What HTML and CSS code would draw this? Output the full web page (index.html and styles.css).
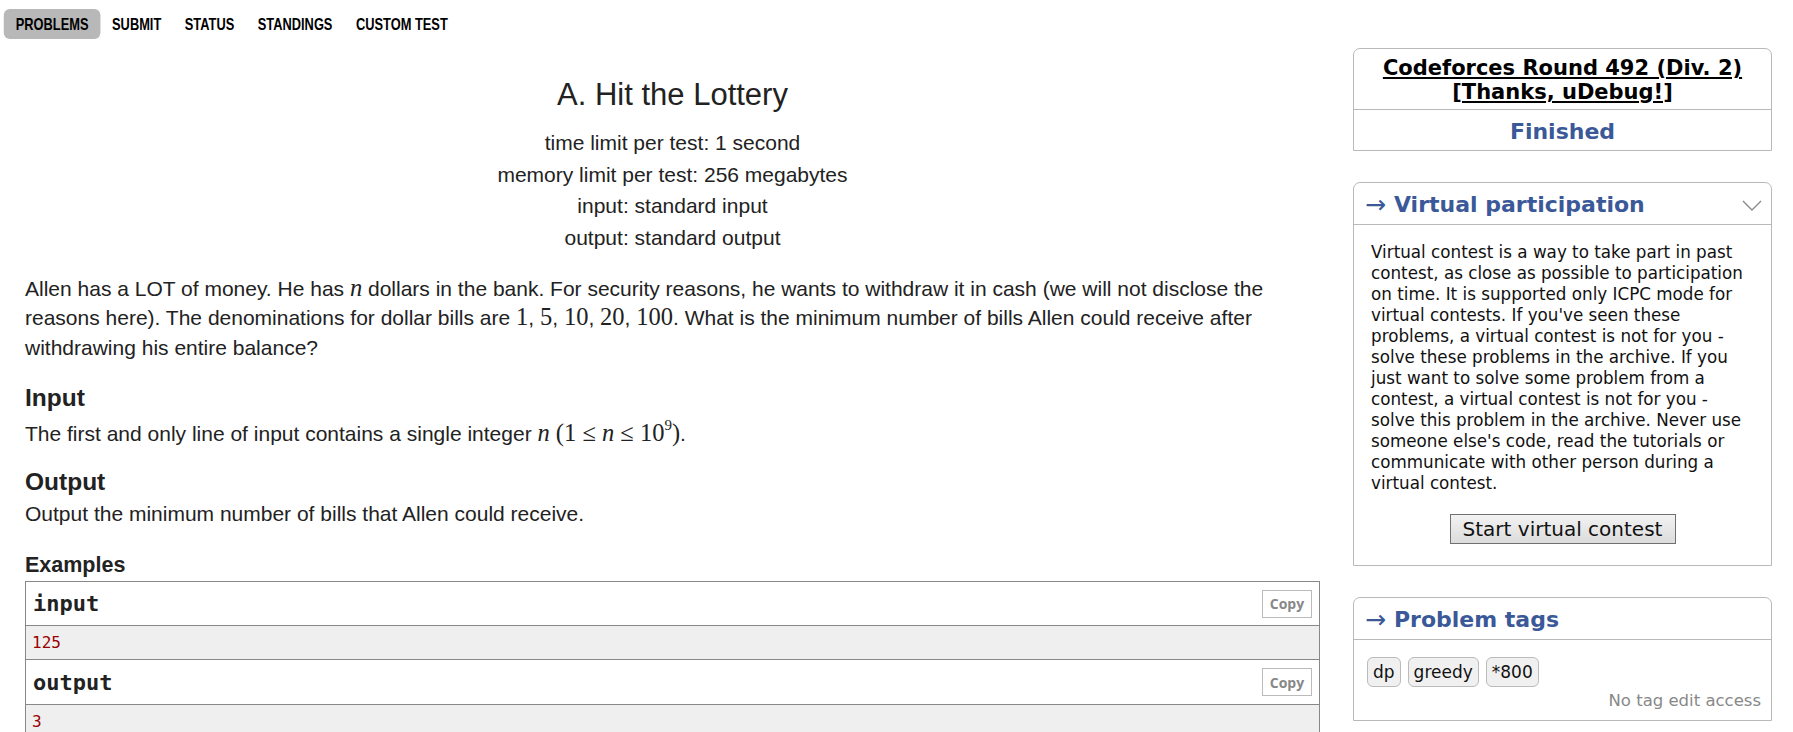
FILE: index.html
```html
<!DOCTYPE html>
<html lang="en">
<head>
<meta charset="utf-8">
<title>A. Hit the Lottery</title>
<link rel="stylesheet" href="styles.css">
</head>
<body>
<nav class="menu">
  <a class="menu-item active" href="#">PROBLEMS</a>
  <a class="menu-item" href="#">SUBMIT</a>
  <a class="menu-item" href="#">STATUS</a>
  <a class="menu-item" href="#">STANDINGS</a>
  <a class="menu-item" href="#">CUSTOM TEST</a>
</nav>
<div class="page">
  <main class="problem">
    <div class="header">
      <h1 class="title">A. Hit the Lottery</h1>
      <div class="limits">
        <div>time limit per test: 1 second</div>
        <div>memory limit per test: 256 megabytes</div>
        <div>input: standard input</div>
        <div>output: standard output</div>
      </div>
    </div>
    <p class="legend">Allen has a LOT of money. He has <span class="math"><i>n</i></span> dollars in the bank. For security reasons, he wants to withdraw it in cash (we will not disclose the reasons here). The denominations for dollar bills are <span class="math">1</span>, <span class="math">5</span>, <span class="math">10</span>, <span class="math">20</span>, <span class="math">100</span>. What is the minimum number of bills Allen could receive after withdrawing his entire balance?</p>

    <h2 class="section-title">Input</h2>
    <p class="section-text">The first and only line of input contains a single integer <span class="math"><i>n</i> (1 ≤ <i>n</i> ≤ 10<sup>9</sup>)</span>.</p>

    <h2 class="section-title out">Output</h2>
    <p class="section-text out-text">Output the minimum number of bills that Allen could receive.</p>

    <h3 class="examples-title">Examples</h3>
    <div class="sample">
      <div class="sample-head"><span>input</span><button class="copy">Copy</button></div>
      <pre class="sample-data">125</pre>
      <div class="sample-head"><span>output</span><button class="copy">Copy</button></div>
      <pre class="sample-data">3</pre>
    </div>
  </main>

  <aside class="sidebar">
    <section class="box">
      <div class="contest-name"><a href="#">Codeforces Round 492 (Div. 2) [Thanks, uDebug!]</a></div>
      <div class="contest-phase">Finished</div>
    </section>

    <section class="box">
      <div class="box-head">
        <span class="arrow">→</span><span class="box-title">Virtual participation</span>
        <svg class="chevron" width="20" height="11" viewBox="0 0 20 11"><polyline points="1,1 10,10 19,1" fill="none" stroke="#8a8a8a" stroke-width="1.4"/></svg>
      </div>
      <div class="box-body">
        <p class="vp-text">Virtual contest is a way to take part in past contest, as close as possible to participation on time. It is supported only ICPC mode for virtual contests. If you've seen these problems, a virtual contest is not for you - solve these problems in the archive. If you just want to solve some problem from a contest, a virtual contest is not for you - solve this problem in the archive. Never use someone else's code, read the tutorials or communicate with other person during a virtual contest.</p>
        <div class="vp-action"><button class="vp-button">Start virtual contest</button></div>
      </div>
    </section>

    <section class="box">
      <div class="box-head">
        <span class="arrow">→</span><span class="box-title">Problem tags</span>
      </div>
      <div class="tags-body">
        <div class="tags">
          <span class="tag">dp</span>
          <span class="tag">greedy</span>
          <span class="tag">*800</span>
        </div>
        <div class="tag-note">No tag edit access</div>
      </div>
    </section>
  </aside>
</div>
</body>
</html>
```

FILE: styles.css
```css
html, body {
  margin: 0;
  padding: 0;
  background: #fff;
}

body {
  font-family: "Liberation Sans", Arial, sans-serif;
  color: #222;
}

/* ---------- top menu (narrow face emulated by horizontal scale) ---------- */
.menu {
  display: flex;
  padding: 9px 0 9px 5.3px;
  height: 30px;
  transform: scaleX(0.755);
  transform-origin: left top;
}

.menu-item {
  display: block;
  height: 30px;
  line-height: 31px;
  padding: 0 15.6px;
  border-radius: 8px / 6px;
  font-family: "Liberation Sans", Arial, sans-serif;
  font-weight: bold;
  font-size: 17px;
  color: #000;
  text-decoration: none;
  white-space: nowrap;
}

.menu-item.active {
  background: #b8b8b8;
}

/* ---------- page ---------- */
.page {
  display: flex;
  align-items: flex-start;
  gap: 33px;
  padding: 0 21px 0 25px;
}

.problem {
  flex: 1;
  min-width: 0;
}

.sidebar {
  width: 419px;
  flex: none;
  display: flex;
  flex-direction: column;
  gap: 31px;
}

/* ---------- problem header ---------- */
.header {
  text-align: center;
  padding-top: 27px;
}

.title {
  margin: 0;
  font-weight: normal;
  font-size: 31px;
  line-height: 40px;
  color: #222;
}

.limits {
  margin-top: 12px;
  font-size: 21px;
  line-height: 31.5px;
}

/* ---------- statement ---------- */
.legend,
.section-text {
  margin: 0;
  font-size: 21px;
  line-height: 29.4px;
}

.legend {
  margin-top: 21px;
}

.math {
  font-family: "Liberation Serif", "Times New Roman", serif;
  font-size: 24.5px;
  line-height: 0;
}

.math i {
  font-style: italic;
}

.math sup {
  font-size: 15px;
  line-height: 0;
  vertical-align: 11px;
}

.section-title {
  margin: 21px 0 0;
  font-size: 24.5px;
  line-height: 30px;
  font-weight: bold;
}

.section-title.out {
  margin-top: 18px;
}

.section-text {
  margin-top: 6px;
}

.section-text.out-text {
  margin-top: 2px;
}

.examples-title {
  margin: 24px 0 0;
  font-size: 21.5px;
  line-height: 26px;
  font-weight: bold;
}

/* ---------- samples ---------- */
.sample {
  margin-top: 3px;
  border: 1px solid #888;
}

.sample-head {
  display: flex;
  align-items: center;
  justify-content: space-between;
  height: 43px;
  padding: 0 7px 0 7px;
  border-bottom: 1px solid #888;
  font-family: "DejaVu Sans Mono", "Liberation Mono", monospace;
  font-weight: bold;
  font-size: 22px;
  color: #222;
}

.sample-head + .sample-data + .sample-head {
  height: 44px;
}

.copy {
  height: 28px;
  width: 50px;
  padding: 0;
  border: 1px solid #bbb;
  background: #fff;
  font-family: "Open Sans", "Liberation Sans", sans-serif;
  font-weight: bold;
  font-size: 14px;
  color: #888;
}

.sample-data {
  margin: 0;
  height: 33px;
  line-height: 33px;
  padding: 0 6px;
  background: #efefef;
  border-bottom: 1px solid #888;
  font-family: "DejaVu Sans Mono", "Liberation Mono", monospace;
  font-size: 16px;
  color: #990000;
}

.sample-data:last-child {
  border-bottom: none;
}

/* ---------- sidebar boxes ---------- */
.box {
  border: 1px solid #b9b9b9;
  border-radius: 7px 7px 0 0;
  font-family: "DejaVu Sans", Verdana, sans-serif;
  color: #222;
}

.contest-name {
  text-align: center;
  padding: 7px 10px 5px;
  font-size: 21px;
  line-height: 24px;
  font-weight: bold;
  border-bottom: 1px solid #b9b9b9;
}

.contest-name a {
  color: #000;
  text-decoration: underline;
}

.contest-phase {
  text-align: center;
  height: 37px;
  padding-top: 3px;
  line-height: 38px;
  font-size: 22px;
  font-weight: bold;
  color: #3b5998;
}

.box-head {
  display: flex;
  align-items: center;
  height: 40px;
  padding: 1px 9px 0 11px;
  border-bottom: 1px solid #b9b9b9;
  color: #3b5998;
}

.arrow {
  font-size: 25px;
  font-weight: normal;
  margin-right: 8px;
  line-height: 1;
}

.box-title {
  font-size: 22px;
  font-weight: bold;
}

.chevron {
  margin-left: auto;
  margin-top: 3px;
}

.box-body {
  padding: 17px 17px 21px;
}

.vp-text {
  margin: 0;
  padding-right: 5px;
  font-size: 16.75px;
  line-height: 21px;
  color: #111;
}

.vp-action {
  display: flex;
  justify-content: center;
  margin-top: 20px;
}

.vp-button {
  height: 30px;
  width: 226px;
  padding: 0;
  border: 1px solid #707070;
  border-radius: 0;
  background: linear-gradient(#f2f2f2, #dcdcdc);
  font-family: "DejaVu Sans", Verdana, sans-serif;
  font-size: 20px;
  color: #111;
}

.tags-body {
  padding: 17px 10px 8px 13px;
}

.tags {
  display: flex;
  gap: 7px;
}

.tag {
  display: block;
  height: 28px;
  line-height: 28px;
  padding: 0 5px;
  border: 1px solid #bbb;
  border-radius: 6px;
  background: #f0f0f0;
  font-size: 17px;
  color: #111;
}

.tag-note {
  text-align: right;
  margin-top: 3px;
  font-size: 16.5px;
  line-height: 22px;
  color: #888;
}
```
